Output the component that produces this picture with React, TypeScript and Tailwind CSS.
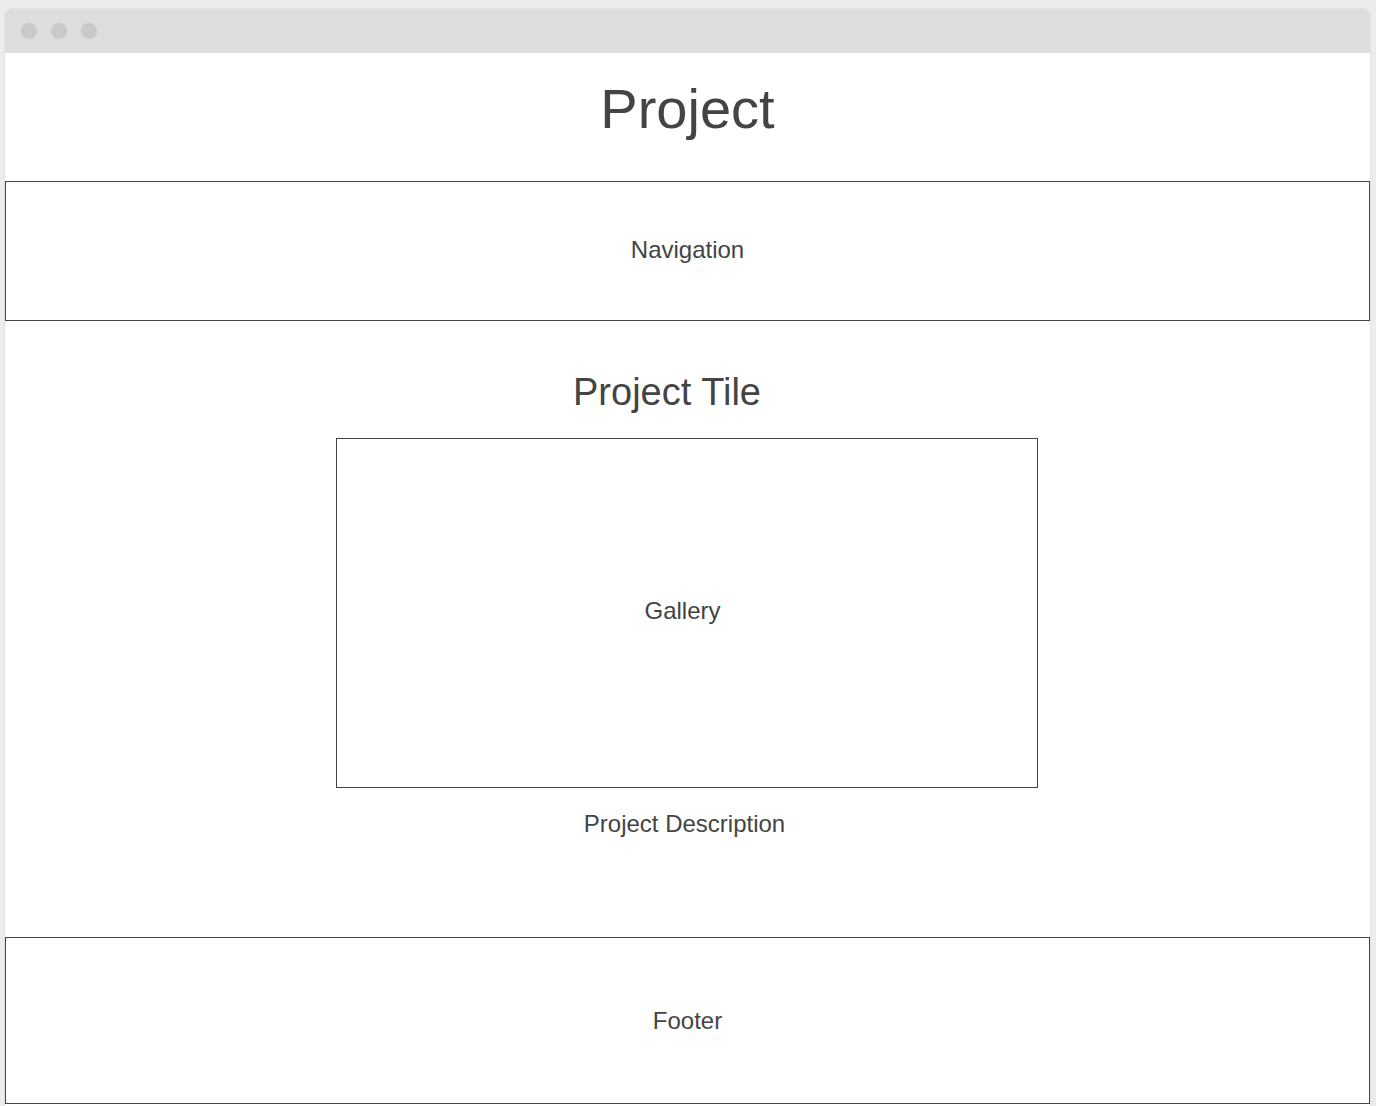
import React from 'react';

const Dot: React.FC = () => <span className="block h-4 w-4 rounded-full bg-[#c9c9c9]" />;

const App: React.FC = () => {
  return (
    <div className="min-h-screen bg-[#ececec] pt-2 pl-1 pr-[5px] font-['Liberation_Sans',Arial,sans-serif] text-[#444]">
      <div className="rounded-t-md border border-b-0 border-[#e2e2e2] bg-white">
        {/* window bar */}
        <div className="flex h-[44px] items-center gap-[14px] rounded-t-md bg-[#dddddd] pl-[16px]">
          <Dot />
          <Dot />
          <Dot />
        </div>

        <div className="h-[128px] pt-[28px] text-center text-[56px] leading-none">Project</div>

        <div className="flex h-[140px] items-center justify-center border border-[#444] pb-[2px] text-[24px] leading-none">
          Navigation
        </div>

        <div className="pt-[52px] pr-[41px] text-center text-[38px] leading-none">Project Tile</div>

        <div className="mt-[27px] flex justify-center pr-[2px]">
          <div className="flex h-[350px] w-[702px] items-center justify-center border border-[#444] pr-[8px] pb-[5px] text-[24px] leading-none">
            Gallery
          </div>
        </div>

        <div className="mt-[24px] pr-[6px] text-center text-[24px] leading-none">Project Description</div>

        <div className="mt-[101px] flex h-[167px] items-center justify-center border border-[#444] text-[24px] leading-none">
          Footer
        </div>
        <div className="h-[3px]" />
      </div>
    </div>
  );
};

export default App;
